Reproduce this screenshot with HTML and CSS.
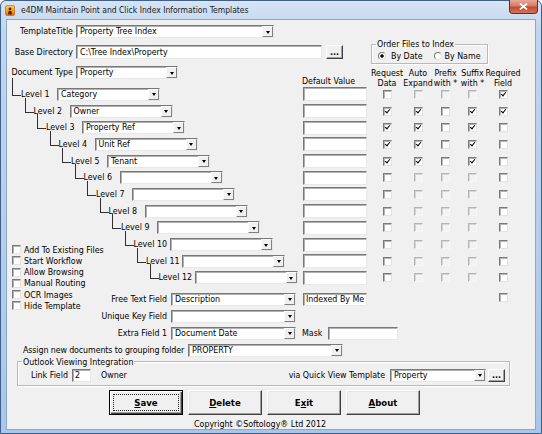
FILE: index.html
```html
<!DOCTYPE html>
<html lang="en">
<head>
<meta charset="utf-8">
<title>e4DM Maintain Point and Click Index Information Templates</title>
<link rel="stylesheet" href="styles.css">
</head>
<body>
<div class="window">
  <div class="titlebar">
    <svg class="appicon" viewBox="0 0 10 11" aria-hidden="true">
      <defs><linearGradient id="ig" x1="0" y1="0" x2="0" y2="1"><stop offset="0" stop-color="#ffd54a"/><stop offset="1" stop-color="#ee6a00"/></linearGradient></defs>
      <rect x="0.5" y="0.5" width="9" height="10" rx="1.5" fill="url(#ig)" stroke="#c25a00" stroke-width="0.6"/>
      <circle cx="5" cy="4" r="1.4" fill="#4a2a10"/>
      <path d="M3 9.5 L3.6 6 H6.4 L7 9.5 Z" fill="#4a2a10"/>
    </svg>
    <span class="title">e4DM Maintain Point and Click Index Information Templates</span>
    <div class="close"><svg viewBox="0 0 9 7" aria-hidden="true"><path d="M1 0.5 L8 6.5 M8 0.5 L1 6.5" stroke="#fff" stroke-width="1.8"/></svg></div>
  </div>

  <div class="client">
    <div class="row r-title">
      <span class="lab">TemplateTitle</span>
      <div class="combo w-title"><span class="v">Property Tree Index</span><i class="dd"></i></div>
    </div>

    <div class="row r-base">
      <span class="lab lab-base">Base Directory</span>
      <div class="tb w-base">C:\Tree Index\Property</div>
      <div class="btn dots">...</div>
      <fieldset class="grp order">
        <legend>Order Files to Index</legend>
        <div class="radios">
          <span class="radio on"></span><span class="rl">By Date</span>
          <span class="radio r2"></span><span class="rl">By Name</span>
        </div>
      </fieldset>
    </div>

    <div class="grid">
      <div class="row doc">
        <span class="lab">Document Type</span>
        <div class="combo w-doc"><span class="v">Property</span><i class="dd"></i></div>
      </div>
      <div class="hdr-dv">Default Value</div>
      <div class="hdr">Request<br>Data</div>
      <div class="hdr">Auto<br>Expand</div>
      <div class="hdr">Prefix<br>with *</div>
      <div class="hdr">Suffix<br>with *</div>
      <div class="hdr">Required<br>Field</div>

      <div class="tree l1"><span class="lv">Level 1</span><div class="combo cl"><span class="v">Category</span><i class="dd"></i></div></div>
      <div class="tb dv"></div><span class="cb"></span><span class="cb dis"></span><span class="cb dis"></span><span class="cb dis"></span><span class="cb on"></span>

      <div class="tree l2"><span class="lv">Level 2</span><div class="combo cl"><span class="v">Owner</span><i class="dd"></i></div></div>
      <div class="tb dv"></div><span class="cb on"></span><span class="cb on"></span><span class="cb"></span><span class="cb on"></span><span class="cb on"></span>

      <div class="tree l3"><span class="lv">Level 3</span><div class="combo cl"><span class="v">Property Ref</span><i class="dd"></i></div></div>
      <div class="tb dv"></div><span class="cb on"></span><span class="cb on"></span><span class="cb"></span><span class="cb on"></span><span class="cb"></span>

      <div class="tree l4"><span class="lv">Level 4</span><div class="combo cl"><span class="v">Unit Ref</span><i class="dd"></i></div></div>
      <div class="tb dv"></div><span class="cb on"></span><span class="cb on"></span><span class="cb"></span><span class="cb on"></span><span class="cb"></span>

      <div class="tree l5"><span class="lv">Level 5</span><div class="combo cl"><span class="v">Tenant</span><i class="dd"></i></div></div>
      <div class="tb dv"></div><span class="cb on"></span><span class="cb on"></span><span class="cb"></span><span class="cb on"></span><span class="cb"></span>

      <div class="tree l6"><span class="lv">Level 6</span><div class="combo cl"><span class="v"></span><i class="dd"></i></div></div>
      <div class="tb dv"></div><span class="cb"></span><span class="cb dis"></span><span class="cb dis"></span><span class="cb dis"></span><span class="cb"></span>

      <div class="tree l7"><span class="lv">Level 7</span><div class="combo cl"><span class="v"></span><i class="dd"></i></div></div>
      <div class="tb dv"></div><span class="cb"></span><span class="cb dis"></span><span class="cb dis"></span><span class="cb dis"></span><span class="cb"></span>

      <div class="tree l8"><span class="lv">Level 8</span><div class="combo cl"><span class="v"></span><i class="dd"></i></div></div>
      <div class="tb dv"></div><span class="cb"></span><span class="cb dis"></span><span class="cb dis"></span><span class="cb dis"></span><span class="cb"></span>

      <div class="tree l9"><span class="lv">Level 9</span><div class="combo cl"><span class="v"></span><i class="dd"></i></div></div>
      <div class="tb dv"></div><span class="cb"></span><span class="cb dis"></span><span class="cb dis"></span><span class="cb dis"></span><span class="cb"></span>

      <div class="tree l10"><span class="lv">Level 10</span><div class="combo cl"><span class="v"></span><i class="dd"></i></div></div>
      <div class="tb dv"></div><span class="cb"></span><span class="cb dis"></span><span class="cb dis"></span><span class="cb dis"></span><span class="cb"></span>

      <div class="tree l11"><span class="lv">Level 11</span><div class="combo cl"><span class="v"></span><i class="dd"></i></div></div>
      <div class="tb dv"></div><span class="cb"></span><span class="cb dis"></span><span class="cb dis"></span><span class="cb dis"></span><span class="cb"></span>

      <div class="tree l12"><span class="lv">Level 12</span><div class="combo cl"><span class="v"></span><i class="dd"></i></div></div>
      <div class="tb dv"></div><span class="cb"></span><span class="cb dis"></span><span class="cb dis"></span><span class="cb dis"></span><span class="cb"></span>

      <div class="opts">
        <div class="opt"><span class="cb"></span><span>Add To Existing Files</span></div>
        <div class="opt"><span class="cb"></span><span>Start Workflow</span></div>
        <div class="opt"><span class="cb"></span><span>Allow Browsing</span></div>
        <div class="opt"><span class="cb"></span><span>Manual Routing</span></div>
        <div class="opt"><span class="cb"></span><span>OCR Images</span></div>
        <div class="opt"><span class="cb"></span><span>Hide Template</span></div>
      </div>

      <div class="frow fr1"><span class="frl">Free Text Field</span><div class="combo w-fr"><span class="v">Description</span><i class="dd"></i></div></div>
      <div class="tb dv ind">Indexed By Me</div>
      <span class="cb freq"></span>

      <div class="frow fr2"><span class="frl">Unique Key Field</span><div class="combo w-fr"><span class="v"></span><i class="dd"></i></div></div>

      <div class="frow fr3"><span class="frl">Extra Field 1</span><div class="combo w-fr"><span class="v">Document Date</span><i class="dd"></i></div></div>
      <div class="maskrow"><span>Mask</span><div class="tb w-mask"></div></div>
    </div>

    <div class="row assign">
      <span class="alab">Assign new documents to grouping folder</span>
      <div class="combo w-assign"><span class="v">PROPERTY</span><i class="dd"></i></div>
    </div>

    <fieldset class="grp outlook">
      <legend>Outlook Viewing Integration</legend>
      <div class="row orow">
        <span class="llab">Link Field</span>
        <div class="tb w-link">2</div>
        <span class="owner">Owner</span>
        <span class="qv">via Quick View Template</span>
        <div class="combo w-qv"><span class="v">Property</span><i class="dd"></i></div>
        <div class="btn dots dots2">...</div>
      </div>
    </fieldset>

    <div class="buttons">
      <div class="pbtn def"><span><u>S</u>ave</span></div>
      <div class="pbtn"><span><u>D</u>elete</span></div>
      <div class="pbtn"><span>E<u>x</u>it</span></div>
      <div class="pbtn"><span><u>A</u>bout</span></div>
    </div>

    <div class="copy">Copyright ©Softology® Ltd 2012</div>
  </div>
</div>
</body>
</html>
```

FILE: styles.css
```css
* { box-sizing: border-box; }
html, body { margin: 0; padding: 0; }
body {
  width: 542px; height: 434px; overflow: hidden; background: #ffffff;
  font-family: "DejaVu Sans Condensed", "DejaVu Sans", sans-serif;
  font-stretch: condensed;
  font-size: 8.8px; color: #000;
}

.window {
  width: 542px; height: 434px;
  border: 1px solid #3f6089;
  border-radius: 6px 6px 0 0;
  background: linear-gradient(#d6e4f4, #c0d6ee 30px, #a9c6ea 434px);
  padding: 0 5px 5px 5px;
  display: flex; flex-direction: column;
}

.titlebar {
  height: 18px; margin: 0 -5px; flex: none;
  display: flex; align-items: center;
}
.appicon { width: 10px; height: 11px; margin-left: 4px; flex: none; }
.title {
  margin-left: 6px;
  font-size: 8.5px; color: #1a1a1a; white-space: nowrap;
}
.close {
  margin-left: auto; align-self: flex-start; margin-top: -1px; margin-right: 3px;
  width: 29px; height: 14px; flex: none;
  border: 1px solid #6e2a20; border-top: none;
  border-radius: 0 0 4px 4px;
  background: linear-gradient(#e9a799, #d77b65 45%, #c24a30 55%, #d2765c);
  display: flex; align-items: center; justify-content: center;
}
.close svg { width: 9px; height: 7px; }

.client {
  flex: 1; background: #f0f0f0;
  border: 1px solid #8ba7c9;
  padding-top: 5px;
}

.row { display: flex; align-items: center; }
.lab { width: 66px; margin-right: 3px; text-align: right; white-space: nowrap; flex: none; line-height: 13px; }

/* sunken controls */
.tb, .combo {
  background: #fff;
  border: 1px solid; border-color: #787878 #e8e8e8 #e8e8e8 #787878;
  box-shadow: inset 1px 1px 0 #b0b0b0;
  white-space: nowrap; overflow: hidden;
}
.tb { height: 14px; line-height: 12px; padding-left: 3px; }
.combo { display: flex; height: 13px; flex: none; }
.combo .v { flex: 1; padding-left: 3px; line-height: 11px; overflow: hidden; }
.combo .dd {
  width: 11px; height: 11px; flex: none;
  background: #f0f0f0;
  border: 1px solid; border-color: #fbfbfb #808080 #808080 #fbfbfb;
  display: flex; align-items: center; justify-content: center;
}
.combo .dd::after {
  content: ""; border-left: 2.5px solid transparent; border-right: 2.5px solid transparent;
  border-top: 3px solid #000; margin-top: 1px;
}

.btn {
  background: #f0f0f0;
  border: 1px solid; border-color: #fff #404040 #404040 #fff;
  box-shadow: inset -1px -1px 0 #a0a0a0;
  display: flex; align-items: center; justify-content: center;
  font-weight: bold; line-height: 8px;
}

.r-title { height: 13px; }
.w-title { width: 198px; }

.r-base { align-items: flex-start; margin-top: 1px; }
.lab-base { margin-top: 6px; line-height: 14px; }
.w-base { width: 246px; margin-top: 6px; }
.dots { width: 17px; height: 14px; margin-top: 6px; margin-left: 4px; }

.grp {
  margin: 0; padding: 0; min-width: 0;
  border: 1px solid #b9b9b9;
  box-shadow: inset 1px 1px 0 #fff, 1px 1px 0 #fff;
}
.grp legend { padding: 0 1px; margin-left: 4px; line-height: 10px; }
.order { width: 117px; height: 25px; margin-left: 28px; }
.radios { display: flex; align-items: center; padding-left: 6px; margin-top: 1px; height: 11px; }
.radio {
  width: 8px; height: 8px; border-radius: 50%; flex: none;
  border: 1px solid; border-color: #7a7a7a #e0e0e0 #e0e0e0 #7a7a7a;
  background: #fff;
}
.radio.on { background: radial-gradient(circle, #000 0 1.4px, #fff 1.9px); }
.rl { margin-left: 5px; white-space: nowrap; }
.radio.r2 { margin-left: 11px; }
.r2 + .rl { margin-left: 3px; }

/* main grid */
.grid {
  display: grid; margin-top: 1px;
  grid-template-columns: 293px 70px 34px 28px 27px 27px 34px;
  grid-template-rows: 21px repeat(12, 16.7px) 4.6px repeat(3, 17px);
}
.doc { grid-row: 1; grid-column: 1; align-self: start; margin-top: 1px; }
.w-doc { width: 102px; }
.hdr-dv { align-self: end; line-height: 10px; padding-left: 2px; white-space: nowrap; }
.hdr {
  align-self: end; margin-bottom: -2px; line-height: 10px;
  display: flex; justify-content: center; text-align: center; white-space: nowrap;
}

.tree {
  grid-column: 1; display: flex; align-items: center;
  padding-left: calc(14px + (var(--n) - 1) * 12.5px);
}
.l1 { --n: 1; grid-row: 2; } .l2 { --n: 2; grid-row: 3; } .l3 { --n: 3; grid-row: 4; }
.l4 { --n: 4; grid-row: 5; } .l5 { --n: 5; grid-row: 6; } .l6 { --n: 6; grid-row: 7; }
.l7 { --n: 7; grid-row: 8; } .l8 { --n: 8; grid-row: 9; } .l9 { --n: 9; grid-row: 10; }
.l10 { --n: 10; grid-row: 11; } .l11 { --n: 11; grid-row: 12; } .l12 { --n: 12; grid-row: 13; }
.lv { width: 36px; flex: none; white-space: nowrap; position: relative; line-height: 11px; }
.lv::before {
  content: ""; position: absolute; left: -9px; width: 8px; bottom: 4px; height: 14px;
  border-left: 1px solid #303030; border-bottom: 1px solid #303030;
}
.l1 .lv::before { height: 17px; }
.cl { width: 103px; }

.dv { width: 64px; margin-left: 3px; align-self: center; }
.cb {
  width: 9px; height: 9px; justify-self: center; align-self: center; flex: none;
  background: #fff; position: relative;
  border: 1px solid; border-color: #7a7a7a #e2e2e2 #e2e2e2 #7a7a7a;
  box-shadow: inset 1px 1px 0 #b4b4b4;
}
.cb.dis { background: #f3f3f3; border-color: #b4b4b4 #f6f6f6 #f6f6f6 #b4b4b4; box-shadow: inset 1px 1px 0 #d6d6d6; }
.cb.on::after {
  content: ""; position: absolute; left: 2.2px; top: 0.2px; width: 2px; height: 4px;
  border: solid #000; border-width: 0 1.6px 1.6px 0; transform: rotate(40deg);
}

.opts { grid-column: 1; grid-row: 11 / 18; padding-top: 8px; padding-left: 5px; align-self: start; }
.opt { height: 11.2px; display: flex; align-items: center; white-space: nowrap; }
.opt span:last-child { margin-left: 3px; }

.frow { grid-column: 1; display: flex; align-items: center; }
.fr1 { grid-row: 15; } .fr2 { grid-row: 16; } .fr3 { grid-row: 17; }
.frl { width: 160px; margin-right: 4px; text-align: right; white-space: nowrap; flex: none; }
.w-fr { width: 125px; }
.ind { grid-row: 15; grid-column: 2; height: 13px; line-height: 11px; padding-left: 2px; }
.freq { grid-row: 15; grid-column: 7; align-self: start; margin-top: 2px; }
.maskrow { grid-row: 17; grid-column: 2 / span 3; display: flex; align-items: center; padding-left: 2px; }
.w-mask { width: 70px; height: 13px; margin-left: 6px; flex: none; }

.assign { margin-top: 2px; padding-left: 16px; }
.alab { width: 165px; flex: none; white-space: nowrap; letter-spacing: -0.1px; }
.w-assign { width: 155px; }

.outlook { width: 493px; height: 29px; margin-left: 10px; }
.outlook legend { margin-left: 4px; }
.orow { margin-top: 2px; padding-left: 13px; padding-right: 4px; height: 13px; }
.llab { width: 41px; flex: none; white-space: nowrap; }
.w-link { width: 19px; height: 13px; line-height: 11px; padding-left: 2px; flex: none; }
.owner { margin-left: 10px; }
.qv { margin-left: auto; margin-right: 5px; white-space: nowrap; }
.w-qv { width: 96px; }
.dots2 { height: 13px; margin: 0 0 0 2px; }

.buttons { display: flex; gap: 5px; margin-top: 4px; padding-left: 102px; }
.pbtn {
  width: 74px; height: 25px;
  background: #f0f0f0;
  border: 1px solid; border-color: #fff #404040 #404040 #fff;
  box-shadow: inset -1px -1px 0 #a0a0a0, inset 1px 1px 0 #e6e6e6;
  display: flex; align-items: center; justify-content: center;
  font-weight: bold; font-size: 9.5px;
}
.pbtn.def {
  border: 1px solid #000;
  box-shadow: inset 1px 1px 0 #fff, inset -1px -1px 0 #404040, inset -2px -2px 0 #a0a0a0;
  padding: 3px;
}
.pbtn.def span {
  flex: 1; align-self: stretch; display: flex; align-items: center; justify-content: center;
  border: 1px dotted #222;
}

.copy { width: 506px; text-align: center; margin-top: 4px; line-height: 10px; }
```
